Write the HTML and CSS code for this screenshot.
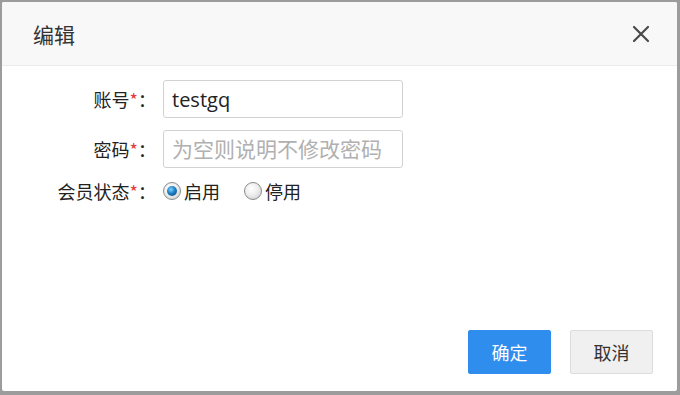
FILE: index.html
```html
<!DOCTYPE html>
<html lang="zh-CN">
<head>
    <meta charset="UTF-8">
    <meta name="viewport" content="width=device-width, initial-scale=1.0">
    <link rel="stylesheet" href="styles.css">
    <title>编辑</title>
</head>

<body>
    <div class="dialog">
        <div class="dialog-head">
            <span class="dialog-title">编辑</span>
            <button class="close-btn" title="关闭">
                <svg width="18" height="18" viewBox="0 0 18 18">
                    <path d="M2 2 L16 16 M16 2 L2 16" stroke="#4a4a4a" stroke-width="2.2" stroke-linecap="round"/>
                </svg>
            </button>
        </div>

        <div class="dialog-body">
            <div class="form-row">
                <label class="form-label">账号<span class="req">*</span>：</label>
                <input class="form-input" type="text" value="testgq">
            </div>

            <div class="form-row">
                <label class="form-label">密码<span class="req">*</span>：</label>
                <input class="form-input" type="password" placeholder="为空则说明不修改密码">
            </div>

            <div class="form-row radio-row">
                <label class="form-label">会员状态<span class="req">*</span>：</label>
                <label class="radio-item">
                    <input type="radio" name="status" checked>
                    <span>启用</span>
                </label>
                <label class="radio-item">
                    <input type="radio" name="status">
                    <span>停用</span>
                </label>
            </div>
        </div>

        <div class="dialog-foot">
            <button class="btn btn-primary">确定</button>
            <button class="btn btn-default">取消</button>
        </div>
    </div>
</body>
</html>
```

FILE: styles.css
```css
* {
    box-sizing: border-box;
}

body {
    margin: 0;
    width: 680px;
    height: 395px;
    background: #9c9c9c;
    font-family: "Open Sans", "Noto Sans CJK SC", sans-serif;
    color: #333;
    overflow: hidden;
}

.dialog {
    margin: 2px 3px 4px 2px;
    height: 389px;
    background: #fff;
    border-radius: 2px;
    display: flex;
    flex-direction: column;
}

.dialog-head {
    height: 64px;
    background: #f8f8f8;
    border-bottom: 1px solid #ebebeb;
    border-radius: 2px 2px 0 0;
    display: flex;
    align-items: center;
    justify-content: space-between;
    padding: 0 27px 0 31px;
}

.dialog-title {
    font-family: "Noto Sans CJK SC", sans-serif;
    font-size: 21px;
    color: #333;
}

.close-btn {
    border: none;
    background: none;
    padding: 0;
    width: 18px;
    height: 18px;
    cursor: pointer;
    display: flex;
}

.dialog-body {
    flex: 1;
    padding-top: 14px;
    display: flex;
    flex-direction: column;
    gap: 12px;
}

.form-row {
    display: flex;
    align-items: center;
}

.form-label {
    width: 154px;
    margin-right: 7px;
    text-align: right;
    font-family: "Noto Sans CJK SC", sans-serif;
    font-size: 18px;
    color: #222;
}

.req {
    color: #e4393c;
}

.form-input {
    width: 240px;
    height: 38px;
    border: 1px solid #d2d2d2;
    border-radius: 3px;
    padding: 0 8px;
    font-family: "Open Sans", "Noto Sans CJK SC", sans-serif;
    font-size: 20px;
    color: #222;
    outline: none;
}

.form-input::placeholder {
    font-family: "Noto Sans CJK SC", sans-serif;
    font-size: 21px;
    color: #b0b0b0;
}

.radio-row {
    margin-top: -2px;
}

.radio-item {
    display: flex;
    align-items: center;
    margin-right: 24px;
    font-family: "Noto Sans CJK SC", sans-serif;
    font-size: 18px;
    color: #222;
}

.radio-item input {
    appearance: none;
    margin: 0 3px 0 0;
    width: 18px;
    height: 18px;
    border-radius: 50%;
    border: 1px solid #8a8b8b;
    background: radial-gradient(circle at 40% 35%, #ffffff 0%, #eeeeee 45%, #c8c8c8 100%);
    position: relative;
}

.radio-item input:checked::after {
    content: "";
    position: absolute;
    left: 3px;
    top: 3px;
    width: 10px;
    height: 10px;
    border-radius: 50%;
    background: radial-gradient(circle at 40% 35%, #7fd3ff 0%, #1e7fc4 45%, #0b3f6e 100%);
}

.dialog-foot {
    display: flex;
    justify-content: flex-end;
    gap: 19px;
    padding: 0 24px 17px 0;
}

.btn {
    width: 83px;
    height: 44px;
    border-radius: 2px;
    font-family: "Noto Sans CJK SC", sans-serif;
    font-size: 18px;
    cursor: pointer;
}

.btn-primary {
    background: #2e8ded;
    border: 1px solid #2e8ded;
    color: #fff;
}

.btn-default {
    background: #f0f0f0;
    border: 1px solid #dcdcdc;
    color: #333;
}
```
